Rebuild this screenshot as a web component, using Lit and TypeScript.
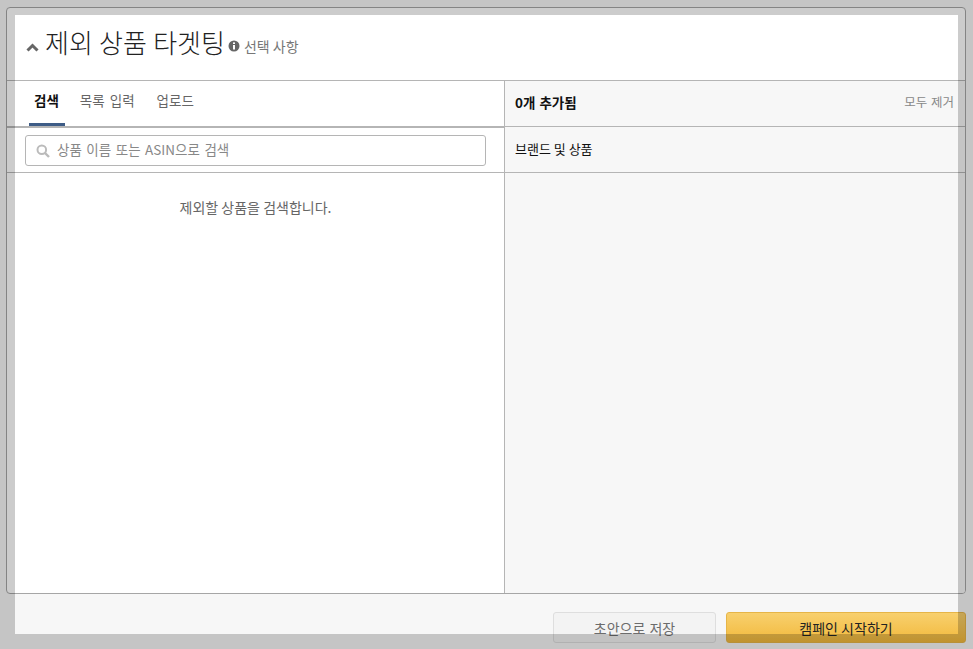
import { LitElement, html, css } from 'lit';
import { customElement, property } from 'lit/decorators.js';

interface Tab {
  name: string;
  active?: boolean;
}

@customElement('app-root')
export class AppRoot extends LitElement {
  static styles = css`
    :host {
      display: block;
      position: relative;
      width: 973px;
      height: 649px;
      overflow: hidden;
      background: #f7f7f7;
      color: #111;
      font-family: "Noto Sans CJK KR", "Noto Sans", sans-serif;
      font-size: 13px;
    }
    .page {
      display: flex;
      flex-direction: column;
      padding: 7px 7px 0 6px;
    }
    .card {
      height: 587px;
      box-sizing: border-box;
      display: flex;
      flex-direction: column;
      background: #fff;
      border: 1px solid #a6a6a6;
      border-radius: 4px;
      overflow: hidden;
    }
    .head {
      flex: none;
      height: 73px;
      box-sizing: border-box;
      display: flex;
      align-items: center;
      padding: 0 0 5px 19px;
      border-bottom: 1px solid #b5b5b5;
    }
    .chevron {
      width: 13px;
      height: 9px;
      margin: 11px 6px 0 0;
    }
    h1 {
      margin: 0;
      font-size: 26px;
      font-weight: 300;
      line-height: 36px;
      word-spacing: 0.5px;
      color: #222;
    }
    .info {
      width: 12px;
      height: 12px;
      margin: 8px 4px 0 3px;
    }
    .optional {
      margin-top: 8px;
      font-size: 14px;
      color: #777;
    }
    .cols {
      flex: 1;
      display: grid;
      grid-template-columns: 498px 1fr;
      min-height: 0;
    }
    .left {
      display: flex;
      flex-direction: column;
      border-right: 1px solid #b5b5b5;
    }
    .tabs {
      flex: none;
      height: 47px;
      box-sizing: border-box;
      display: flex;
      gap: 10px;
      padding-left: 22px;
      border-bottom: 2px solid #b5b5b5;
    }
    .tab {
      height: 45px;
      box-sizing: border-box;
      padding: 9px 7px 0 5px;
      font-size: 13.5px;
      word-spacing: 2px;
      color: #666;
    }
    .tab.active {
      padding-right: 6px;
      font-weight: 700;
      color: #111;
      border-bottom: 3px solid #3e5c86;
    }
    .search-row {
      flex: none;
      height: 45px;
      box-sizing: border-box;
      padding: 7px 18px 0;
      border-bottom: 1px solid #b5b5b5;
    }
    .search {
      height: 31px;
      box-sizing: border-box;
      display: flex;
      align-items: center;
      gap: 7px;
      padding: 0 0 3px 10px;
      background: #fff;
      border: 1px solid #b5b5b5;
      border-radius: 3px;
      font-size: 13.5px;
      word-spacing: 1.5px;
      color: #888;
    }
    .search svg {
      width: 14px;
      height: 14px;
      margin-top: 3px;
    }
    .empty {
      padding-top: 24px;
      text-align: center;
      font-size: 14px;
      line-height: 20px;
      color: #666;
    }
    .right {
      display: flex;
      flex-direction: column;
      background: #f7f7f7;
    }
    .right-head {
      flex: none;
      height: 46px;
      box-sizing: border-box;
      display: flex;
      justify-content: space-between;
      align-items: center;
      padding: 0 11px 4px 10px;
      border-bottom: 1px solid #b5b5b5;
    }
    .count {
      font-weight: 700;
      font-size: 13.5px;
      word-spacing: 1px;
    }
    .clear {
      font-size: 12.5px;
      word-spacing: 1px;
      color: #888;
    }
    .right-sub {
      flex: none;
      height: 46px;
      box-sizing: border-box;
      display: flex;
      align-items: center;
      padding: 0 0 2px 10px;
      border-bottom: 1px solid #b5b5b5;
      font-size: 13px;
    }
    .foot {
      display: flex;
      justify-content: flex-end;
      gap: 10px;
      padding-top: 18px;
    }
    .btn {
      height: 31px;
      box-sizing: border-box;
      display: flex;
      align-items: center;
      justify-content: center;
      border-radius: 3px;
      font-size: 14px;
    }
    .btn.draft {
      width: 163px;
      background: #f3f3f3;
      border: 1px solid #dedede;
      color: #6c6c6c;
      word-spacing: 1px;
    }
    .btn.launch {
      width: 240px;
      background: linear-gradient(#f8d06e, #f2b93c);
      border: 1px solid #e6b548;
      color: #222;
    }
    /* dim layer, the bright window is the hole in its shadow */
    .hole {
      position: absolute;
      left: 15px;
      top: 15px;
      width: 943px;
      height: 619px;
      box-shadow: 0 0 0 1000px rgba(0, 0, 0, 0.2);
      pointer-events: none;
    }
  `;

  @property({ type: Array })
  tabs: Tab[] = [
    { name: '검색', active: true },
    { name: '목록 입력' },
    { name: '업로드' },
  ];

  render() {
    return html`
      <div class="page">
        <div class="card">
          <div class="head">
            <svg class="chevron" viewBox="0 0 13 9">
              <path d="M1.5 7.5 6.5 2.5 11.5 7.5" fill="none" stroke="#666" stroke-width="3" />
            </svg>
            <h1>제외 상품 타겟팅</h1>
            <svg class="info" viewBox="0 0 12 12">
              <circle cx="6" cy="6" r="5.5" fill="#666" />
              <rect x="5" y="5" width="2" height="4.5" fill="#fff" />
              <rect x="5" y="2.4" width="2" height="1.6" fill="#fff" />
            </svg>
            <span class="optional">선택 사항</span>
          </div>
          <div class="cols">
            <div class="left">
              <div class="tabs">
                ${this.tabs.map(
                  (t) => html`<div class="tab ${t.active ? 'active' : ''}">${t.name}</div>`
                )}
              </div>
              <div class="search-row">
                <div class="search">
                  <svg viewBox="0 0 14 14">
                    <circle cx="5.8" cy="5.8" r="4.3" fill="none" stroke="#bbb" stroke-width="2" />
                    <path d="M9 9 13 13" stroke="#bbb" stroke-width="2.4" />
                  </svg>
                  <span>상품 이름 또는 ASIN으로 검색</span>
                </div>
              </div>
              <div class="empty">제외할 상품을 검색합니다.</div>
            </div>
            <div class="right">
              <div class="right-head">
                <span class="count">0개 추가됨</span>
                <span class="clear">모두 제거</span>
              </div>
              <div class="right-sub">브랜드 및 상품</div>
            </div>
          </div>
        </div>
        <div class="foot">
          <div class="btn draft">초안으로 저장</div>
          <div class="btn launch">캠페인 시작하기</div>
        </div>
      </div>
      <div class="hole"></div>
    `;
  }
}

declare global {
  interface HTMLElementTagNameMap {
    'app-root': AppRoot;
  }
}
